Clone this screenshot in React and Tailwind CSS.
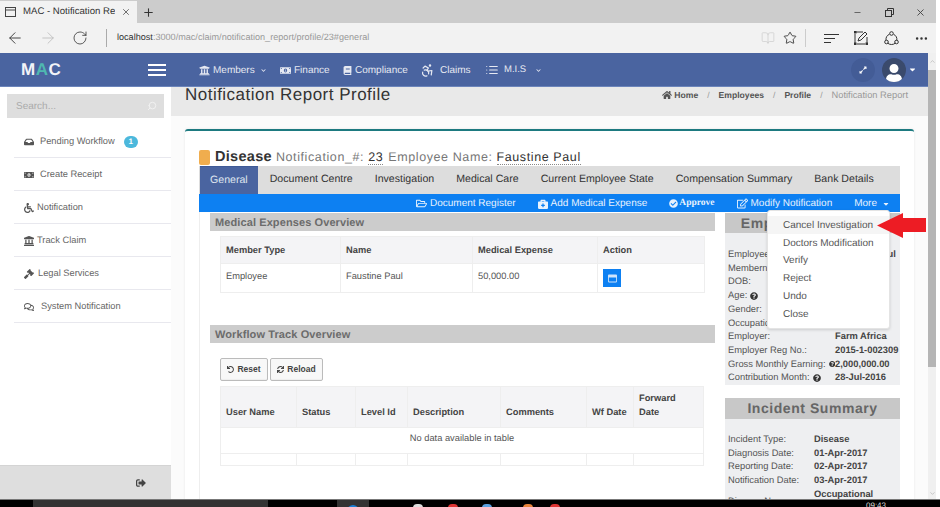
import React from "react";
import {
  FaUniversity, FaMoneyBillAlt, FaBook, FaChevronDown, FaExpandAlt, FaUser, FaCaretDown, FaHome,
  FaInbox, FaWheelchair, FaGavel, FaRegComments, FaSignOutAlt, FaLandmark, FaRegFolderOpen, FaBriefcaseMedical,
  FaCheckCircle, FaRegEdit, FaQuestionCircle, FaUndo, FaSync, FaRegWindowMaximize
} from "react-icons/fa";
import { LuAccessibility, LuList, LuArrowLeft, LuArrowRight, LuRotateCw, LuStar, LuBookOpen, LuX, LuPlus, LuMinus, LuEllipsis, LuSearch, LuChevronUp, LuChevronDown } from "react-icons/lu";

const font = "[font-family:'Liberation_Sans',Arial,sans-serif] [text-rendering:geometricPrecision]";

function Chrome() {
  return (
    <>
      <div className="flex h-[23px] shrink-0 items-center bg-[#cccccc] pt-px">
        <div className="flex h-full w-[137px] items-center bg-[#f2f2f2] pl-[5px] text-[9.6px] text-[#333]">
          <svg width="12" height="11" viewBox="0 0 12 11" fill="none" stroke="#444"><rect x=".5" y=".5" width="10" height="9" /><path d="M.5 3h10" /></svg>
          <span className="ml-[6px] w-[92px] overflow-hidden whitespace-nowrap">MAC - Notification Report</span>
          <LuX size={10} className="ml-[6px] text-[#555]" />
        </div>
        <LuPlus size={13} className="ml-[5px] text-[#333]" />
        <div className="ml-auto flex items-center pr-[10px] text-[#444]">
          <LuMinus size={9} />
          <svg className="ml-[23px]" width="9" height="9" viewBox="0 0 9 9" fill="none" stroke="#333"><rect x=".5" y="2.5" width="6" height="6" /><path d="M2.5 2V.5h6v6H7" /></svg>
          <LuX size={11} className="ml-[21px]" />
        </div>
      </div>
      <div className="flex h-[30px] shrink-0 items-center bg-[#f2f2f2] text-[#333]">
        <LuArrowLeft size={18} strokeWidth={1.2} className="ml-[6px]" />
        <LuArrowRight size={18} strokeWidth={1.1} className="ml-[15px] text-[#bbb]" />
        <LuRotateCw size={16} strokeWidth={1.2} className="ml-[15px]" />
        <div className="ml-[18px] h-[18px] w-px bg-[#aaa]" />
        <div className="ml-[10px] text-[9.1px] text-[#999]"><span className="font-medium text-[#333]">localhost</span>:3000/mac/claim/notification_report/profile/23#general</div>
        <div className="ml-auto flex items-center pr-[7px]">
          <LuBookOpen size={14} strokeWidth={1.2} className="text-[#ccc]" />
          <LuStar size={14} strokeWidth={1.5} className="ml-[8px]" />
          <div className="ml-[8px] h-[18px] w-px bg-[#ccc]" />
          <svg className="ml-[18px]" width="15" height="9" viewBox="0 0 15 9" stroke="#333"><path d="M0 .5h15M0 4.5h11M0 8.5h7" /></svg>
          <svg className="ml-[15px]" width="14" height="14" viewBox="0 0 14 14" fill="none" stroke="#333"><path d="M2 1h7M1 3v9M13 6v6M3 13h8" /><rect x="0" y="0" width="2" height="2" fill="#333" /><rect x="0" y="12" width="2" height="2" fill="#333" /><rect x="12" y="12" width="2" height="2" fill="#333" /><path d="M4 10l1-3 6-6 2 2-6 6z" /></svg>
          <svg className="ml-[16px]" width="15" height="15" viewBox="0 0 15 15" fill="none" stroke="#333"><path d="M5.5 3.2a6 6 0 0 0-3.5 6M12.8 9.5a6 6 0 0 0-3.2-6.2M3.5 12a6 6 0 0 0 8 0" /><circle cx="7.5" cy="2.5" r="1.8" /><circle cx="2.5" cy="11" r="1.8" /><circle cx="12.5" cy="11" r="1.8" /></svg>
          <LuEllipsis size={15} className="ml-[15px]" />
        </div>
      </div>
    </>
  );
}

function TopNav() {
  return (
    <div className="flex h-[34px] shrink-0 items-center border-b border-[#6c85bb] bg-[#4a64a0]">
      <div className="ml-[21px] w-[127px] text-[17px] leading-none font-bold tracking-[.5px] text-[#f2f4f8]">M<span className="text-[#4fb8b0]">A</span>C</div>
      <div className="flex w-[18px] flex-col gap-[3px]"><i className="h-[2px] bg-white" /><i className="h-[2px] bg-white" /><i className="h-[2px] bg-white" /></div>
      <div className="ml-[33px] flex items-center pt-px text-[10px] text-[#e6e9f2]">
        <FaUniversity size={11} /><span className="ml-[3px] w-[42px]">Members</span><FaChevronDown size={5} className="ml-[6px]" />
        <FaMoneyBillAlt size={11} className="ml-[14px]" /><span className="ml-[3px] w-[35px]">Finance</span>
        <FaBook size={9} className="ml-[14px]" /><span className="ml-[3px] w-[52px]">Compliance</span>
        <LuAccessibility size={15} className="ml-[13px]" /><span className="ml-[5px] w-[31px]">Claims</span>
        <LuList size={14} className="ml-[14px]" /><span className="ml-[5px] w-[24px] pt-px text-[9.5px]">M.I.S</span><FaChevronDown size={5} className="ml-[8px]" />
      </div>
      <div className="ml-auto flex items-center pr-[11px]">
        <div className="flex h-[24px] w-[24px] items-center justify-center rounded-full bg-[#435c96] text-white"><FaExpandAlt size={8} /></div>
        <div className="ml-[7px] flex h-[24px] w-[24px] items-end justify-center overflow-hidden rounded-full bg-[#3a4a6c] text-white"><FaUser size={18} /></div>
        <FaCaretDown size={9} className="ml-[2px] text-white" />
      </div>
    </div>
  );
}

function Sidebar() {
  const items = [
    [FaInbox, "Pending Workflow", 40, true],
    [FaMoneyBillAlt, "Create Receipt", 40],
    [FaWheelchair, "Notification", 37],
    [FaLandmark, "Track Claim", 37],
    [FaGavel, "Legal Services", 38],
    [FaRegComments, "System Notification", 41],
  ];
  return (
    <div className="flex h-full w-[171px] shrink-0 flex-col bg-white">
      <div className="mx-[7px] mt-[7px] flex h-[24px] items-center justify-between bg-[#dedede] pr-[7px] pl-[9px] text-[10px] text-[#aaa]">
        <span>Search...</span><LuSearch size={10} className="-scale-x-100 text-[#f4f4f4]" />
      </div>
      <div className="mt-[7px] ml-[14px]">
        {items.map(([I, t, x, badge]) => (
          <div key={t} className="flex h-[33px] items-center border-b border-[#e8e8ee] pt-[2px] text-[9.3px] text-[#666]">
            <span className="flex w-[10px] justify-center text-[#555]" style={{ marginLeft: 10 }}><I size={10} /></span>
            <span style={{ marginLeft: x - 34 }}>{t}</span>
            {badge && <span className="ml-[9px] flex h-[12px] w-[14px] items-center justify-center rounded-full bg-[#4cb8dc] text-[8px] font-bold text-white">1</span>}
          </div>
        ))}
      </div>
      <div className="mt-auto flex h-[34px] items-center justify-end border-t border-[#d4d4d4] bg-[#dedede] pr-[25px] text-[#444]"><FaSignOutAlt size={10} /></div>
    </div>
  );
}

function Section({ children }) {
  return <div className="flex h-[18px] items-center bg-[#cccccc] pt-[2px] pl-[5px] text-[11px] font-bold tracking-[.1px] text-[#6b6b6b]">{children}</div>;
}

function Card() {
  const tabs = ["Document Centre", "Investigation", "Medical Care", "Current Employee State", "Compensation Summary", "Bank Details"];
  const th = "border border-[#eeeeee] px-[5px] pt-[2px] text-left font-bold align-middle";
  const wf = [["User Name", 76], ["Status", 59], ["Level Id", 52], ["Description", 93], ["Comments", 86], ["Wf Date", 47], [<>Forward<br />Date</>, 70]];
  return (
    <div className="mx-[14px] mt-[13px] h-full rounded-t-[3px] border-t-2 border-[#1d7a80] bg-white shadow-[0_0_3px_rgba(0,0,0,.08)]">
      <div className="mx-[14px] pt-[17px]">
        <div className="flex h-[18px] items-center text-[12.5px] tracking-[.6px] whitespace-nowrap text-[#777]">
          <i className="mr-[5px] h-[15px] w-[11px] rounded-[2px] bg-[#f0ad4e]" />
          <b className="mr-[4px] pt-px text-[14.5px] tracking-[.3px] text-[#333]">Disease</b>
          <span>Notification_#:</span>
          <span className="ml-[4px] border-b border-dotted border-[#888] leading-[14px] text-[#333]">23</span>
          <span className="ml-[5px]">Employee Name:</span>
          <span className="ml-[4px] border-b border-dotted border-[#888] leading-[14px] text-[#333]">Faustine Paul</span>
        </div>
        <div className="flex h-[28px] items-stretch bg-[#dddddd] pl-px text-[10.6px] whitespace-nowrap text-[#333]">
          <div className="flex items-center border-t border-[#3f5a96] bg-[#4a64a0] px-[10px] text-[#dfe4ef]">General</div>
          <div className="flex gap-[22px] pl-[12px]">{tabs.map((t) => <div key={t} className="flex items-center">{t}</div>)}</div>
        </div>
        <div className="flex h-[18px] items-center justify-end gap-[22px] bg-[#0d80f2] pt-px pr-[10px] text-[10px] whitespace-nowrap text-[#e8f2fd]">
          <span className="flex items-center gap-[3px]"><FaRegFolderOpen size={11} />Document Register</span>
          <span className="flex items-center gap-[3px]"><FaBriefcaseMedical size={10} />Add Medical Expense</span>
          <span className="flex items-center gap-[1px] font-['Liberation_Serif'] text-[9.5px] font-bold"><FaCheckCircle size={9} />Approve</span>
          <span className="flex items-center gap-[3px]"><FaRegEdit size={11} />Modify Notification</span>
          <span className="flex items-center gap-[5px]">More<FaCaretDown size={8} /></span>
        </div>
        <div className="flex border-l border-[#eeeeee] pl-[10px]">
          <div className="w-[505px] shrink-0 pt-px">
            <Section>Medical Expenses Overview</Section>
            <div className="px-[10px] pt-[5px]">
              <table className="w-[484px] table-fixed border-collapse text-[9.3px] text-[#555]">
                <colgroup><col className="w-[120px]" /><col className="w-[132px]" /><col className="w-[125px]" /><col className="w-[107px]" /></colgroup>
                <thead><tr className="h-[27px] bg-[#f4f4f6] text-[#444]"><th className={th}>Member Type</th><th className={th}>Name</th><th className={th}>Medical Expense</th><th className={th}>Action</th></tr></thead>
                <tbody><tr className="h-[29px]">
                  <td className="border border-[#eeeeee] px-[5px] pb-[2px]">Employee</td>
                  <td className="border border-[#eeeeee] px-[5px] pb-[2px]">Faustine Paul</td>
                  <td className="border border-[#eeeeee] px-[5px] pb-[2px]">50,000.00</td>
                  <td className="border border-[#eeeeee] px-[5px]"><span className="flex h-[18px] w-[18px] items-center justify-center bg-[#0d80f2] text-[#cfe4fb]"><FaRegWindowMaximize size={9} /></span></td>
                </tr></tbody>
              </table>
            </div>
            <div className="mt-[32px]"><Section>Workflow Track Overview</Section></div>
            <div className="flex gap-[2px] pt-[15px] pl-[10px] text-[8.5px] font-bold text-[#444]">
              <button className="flex h-[23px] w-[48px] items-center justify-center gap-[3px] rounded-[2px] border border-[#bbb] bg-[#f8f8f8] shadow-[inset_0_-1px_1px_rgba(0,0,0,.04)]"><FaUndo size={7} />Reset</button>
              <button className="flex h-[23px] w-[53px] items-center justify-center gap-[3px] rounded-[2px] border border-[#bbb] bg-[#f8f8f8] shadow-[inset_0_-1px_1px_rgba(0,0,0,.04)]"><FaSync size={7} />Reload</button>
            </div>
            <div className="px-[10px] pt-[5px]">
              <table className="w-[483px] table-fixed border-collapse text-[9.3px] text-[#555]">
                <colgroup>{wf.map(([, w], i) => <col key={i} style={{ width: w }} />)}</colgroup>
                <thead><tr className="h-[41px] bg-[#f4f4f6] text-[#444]">{wf.map(([t], i) => <th key={i} className="border border-[#eeeeee] px-[5px] pb-[8px] text-left align-bottom leading-[14px] font-bold whitespace-nowrap">{t}</th>)}</tr></thead>
                <tbody>
                  <tr className="h-[26px]"><td colSpan={7} className="border border-[#eeeeee] pb-[3px] text-center">No data available in table</td></tr>
                  <tr className="h-[12px]">{wf.map(([t], i) => <td key={i} className="border border-[#eeeeee]" />)}</tr>
                </tbody>
              </table>
            </div>
          </div>
          <Summary />
        </div>
      </div>
    </div>
  );
}

function Rows({ rows, w }) {
  return (
    <div className="pl-[3px] text-[9.35px] leading-[13.7px] text-[#555]">
      {rows.map(([a, b, q]) => (
        <div key={a} className="flex whitespace-nowrap">
          <span className="flex shrink-0 items-center gap-[3px]" style={{ width: w }}>{a}{q && <FaQuestionCircle size={8} className="text-[#333]" />}</span>
          <b className="text-[#444]">{b}</b>
        </div>
      ))}
    </div>
  );
}

function Summary() {
  return (
    <div className="ml-[10px] w-[175px] shrink-0 pt-px">
      <div className="bg-[#eeeff1]">
        <div className="flex h-[20px] items-center justify-center bg-[#c8c8c8] text-[14px] font-bold tracking-[.6px] whitespace-nowrap text-[#666]">Employee Summary</div>
        <div className="pt-[15px]">
          <Rows w={107} rows={[["Employee Name:", "Faustine Paul"], ["Membernumber:", "1002"], ["DOB:", "10-Jan-1980"], ["Age:", "37", true], ["Gender:", "Male"], ["Occupation:", "Farmer"], ["Employer:", "Farm Africa"], ["Employer Reg No.:", "2015-1-002309"], ["Gross Monthly Earning:", "2,000,000.00", true], ["Contribution Month:", "28-Jul-2016", true]]} />
        </div>
      </div>
      <div className="mt-[13px] bg-[#eeeff1] pb-[20px]">
        <div className="flex h-[21px] items-center justify-center bg-[#c8c8c8] text-[14px] font-bold tracking-[.55px] text-[#666]">Incident Summary</div>
        <div className="pt-[14px]">
          <Rows w={86} rows={[["Incident Type:", "Disease"], ["Diagnosis Date:", "01-Apr-2017"], ["Reporting Date:", "02-Apr-2017"], ["Notification Date:", "03-Apr-2017"], ["Disease Name:", <>Occupational<br />Disease</>]]} />
        </div>
      </div>
    </div>
  );
}

function Overlays() {
  return (
    <>
      <div className="absolute top-[210px] left-[767px] w-[123px] rounded-[3px] border border-[#e4e4e4] bg-white pt-[5px] pb-[5px] text-[10px] text-[#555] shadow-[0_1px_3px_rgba(0,0,0,.15)]">
        {["Cancel Investigation", "Doctors Modification", "Verify", "Reject", "Undo", "Close"].map((t, i) => (
          <div key={t} className={"flex h-[17.8px] items-center pt-px pl-[15px] whitespace-nowrap " + (i === 0 ? "bg-[#f5f5f5]" : "")}>{t}</div>
        ))}
      </div>
      <svg className="absolute top-[213px] left-[877px]" width="50" height="26" viewBox="0 0 50 26"><path d="M0 12.5 L26 0 L26 5 L49 5 L49 19 L26 19 L26 25 Z" fill="#ed1c24" /></svg>
    </>
  );
}

function Taskbar() {
  const dots = [[418, "#ddd"], [453, "#d33"], [487, "#5aa0e0"], [528, "#e8833a"], [555, "#d33"]];
  return (
    <div className="relative flex h-[8px] shrink-0 border-t border-[#777] bg-black">
      <div className="ml-[33px] w-[235px] bg-[#333]" />
      <div className="ml-[69px] flex w-[32px] justify-center bg-[#333]"><i className="mt-[5px] h-[6px] w-[12px] rounded-t-full bg-[#1a7fd6]" /></div>
      {dots.map(([x, c]) => <i key={x} className="absolute top-[4px] h-[4px] w-[10px] rounded-t-full" style={{ left: x - 5, background: c }} />)}
      <span className="absolute top-[1px] left-[866px] text-[8px] leading-[9px] text-[#ddd]">09:43</span>
    </div>
  );
}

export default function App() {
  return (
    <div className={"relative flex h-[507px] w-[940px] flex-col overflow-hidden bg-white " + font}>
      <div className="flex min-h-0 w-[936px] flex-1 flex-col">
        <Chrome />
        <div className="flex min-h-0 flex-1">
          <div className="flex min-w-0 flex-1 flex-col">
            <TopNav />
            <div className="flex min-h-0 flex-1">
              <Sidebar />
              <div className="flex min-w-0 flex-1 flex-col overflow-hidden bg-[#fbfbfb]">
                <div className="flex h-[29px] shrink-0 justify-between bg-[#e9e9e9] pl-[14px]">
                  <div className="text-[17px] leading-[15px] tracking-[.48px] text-[#333]">Notification Report Profile</div>
                  <div className="flex h-[17px] items-center gap-[9px] pr-[20px] text-[8.6px] font-bold text-[#555]">
                    <span className="flex items-center gap-[2px]"><FaHome size={10} />Home</span><span className="font-normal text-[#999]">/</span><span>Employees</span><span className="font-normal text-[#999]">/</span><span>Profile</span><span className="font-normal text-[#999]">/</span><span className="text-[9.3px] font-normal text-[#999]">Notification Report</span>
                  </div>
                </div>
                <Card />
              </div>
            </div>
          </div>
          <div className="flex w-[8px] shrink-0 flex-col bg-[#f0f0f0] text-[#aaa]">
            <div className="flex h-[17px] items-center justify-center"><LuChevronUp size={7} /></div>
            <div className="h-[297px] bg-[#b5b5b5]" />
            <div className="mt-auto flex h-[12px] items-center justify-center"><LuChevronDown size={7} /></div>
          </div>
        </div>
      </div>
      <Taskbar />
      <Overlays />
    </div>
  );
}
